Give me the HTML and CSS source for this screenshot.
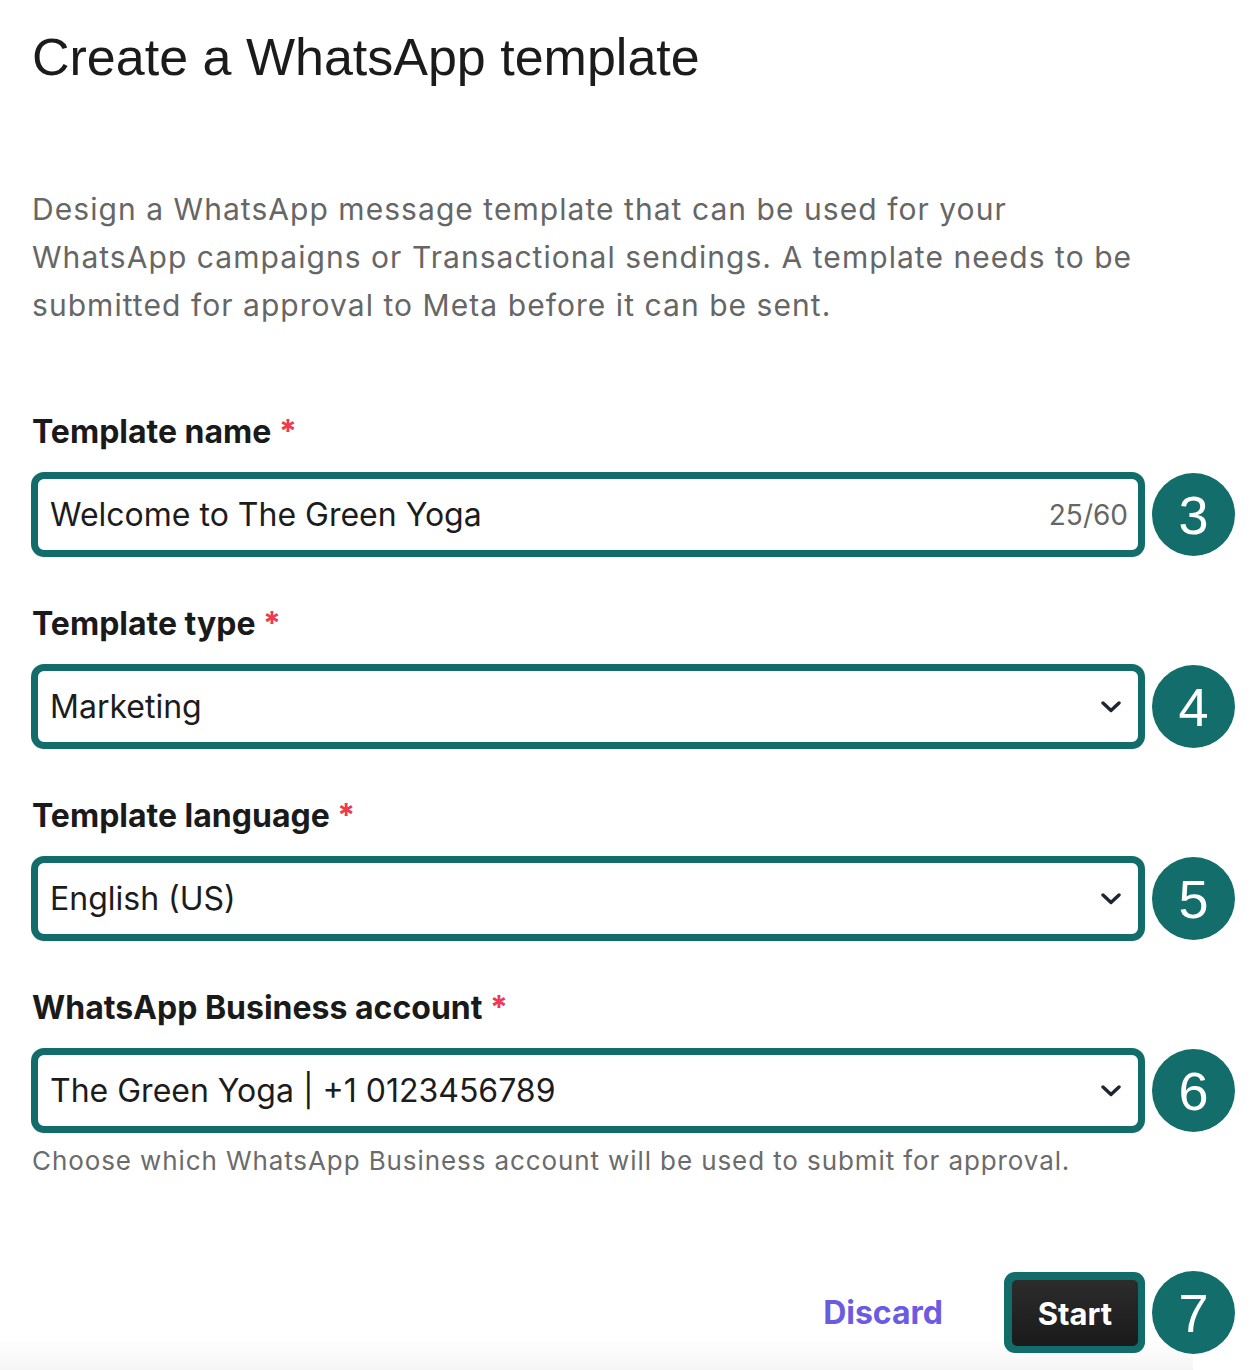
FILE: index.html
```html
<!DOCTYPE html>
<html lang="en">
<head>
<meta charset="utf-8">
<title>Create a WhatsApp template</title>
<link rel="stylesheet" href="styles.css">
</head>
<body>
<div class="page">
  <h1 class="title">Create a WhatsApp template</h1>
  <p class="desc">Design a WhatsApp message template that can be used for your WhatsApp campaigns or Transactional sendings. A template needs to be submitted for approval to Meta before it can be sent.</p>

  <div class="field">
    <div class="label">Template name <span class="req">*</span></div>
    <div class="field-row">
      <div class="box">
        <span class="value">Welcome to The Green Yoga</span>
        <span class="counter">25/60</span>
      </div>
      <div class="badge">3</div>
    </div>
  </div>

  <div class="field">
    <div class="label">Template type <span class="req">*</span></div>
    <div class="field-row">
      <div class="box">
        <span class="value">Marketing</span>
        <svg class="chev" width="20" height="12" viewBox="0 0 20 12"><path d="M2 2 L10 9.5 L18 2" fill="none" stroke="#1e2533" stroke-width="3.4" stroke-linecap="round" stroke-linejoin="round"/></svg>
      </div>
      <div class="badge">4</div>
    </div>
  </div>

  <div class="field">
    <div class="label">Template language <span class="req">*</span></div>
    <div class="field-row">
      <div class="box">
        <span class="value">English (US)</span>
        <svg class="chev" width="20" height="12" viewBox="0 0 20 12"><path d="M2 2 L10 9.5 L18 2" fill="none" stroke="#1e2533" stroke-width="3.4" stroke-linecap="round" stroke-linejoin="round"/></svg>
      </div>
      <div class="badge">5</div>
    </div>
  </div>

  <div class="field">
    <div class="label">WhatsApp Business account <span class="req">*</span></div>
    <div class="field-row">
      <div class="box">
        <span class="value">The Green Yoga | +1 0123456789</span>
        <svg class="chev" width="20" height="12" viewBox="0 0 20 12"><path d="M2 2 L10 9.5 L18 2" fill="none" stroke="#1e2533" stroke-width="3.4" stroke-linecap="round" stroke-linejoin="round"/></svg>
      </div>
      <div class="badge">6</div>
    </div>
    <div class="help">Choose which WhatsApp Business account will be used to submit for approval.</div>
  </div>

  <div class="footer">
    <a class="discard">Discard</a>
    <div class="start-ring"><button class="start">Start</button></div>
    <div class="badge">7</div>
  </div>
</div>
</body>
</html>
```

FILE: styles.css
```css
* { box-sizing: border-box; }

html, body {
  margin: 0;
  padding: 0;
  background: #ffffff;
}

body {
  font-family: Inter, "Noto Sans", sans-serif;
  color: #1c1c1c;
}

.page {
  width: 1254px;
  height: 1370px;
  padding: 27px 0 0 32px;
  background-image: linear-gradient(to bottom, rgba(246,246,246,0) 1338px, #f5f5f5 1370px);
  background-size: 1193px 100%;
  background-repeat: no-repeat;
  overflow: hidden;
}

.title {
  margin: 0;
  font-family: "Liberation Sans", Arial, sans-serif;
  font-weight: 400;
  font-size: 52px;
  line-height: 60px;
  color: #1b1b1b;
}

.desc {
  margin: 98px 0 0 0;
  width: 1110px;
  font-size: 30px;
  line-height: 48px;
  letter-spacing: 1.05px;
  color: #666666;
}

.field { margin-top: 47px; }
.field:first-of-type { margin-top: 83px; }

.label {
  font-size: 32px;
  line-height: 40px;
  font-weight: 700;
  color: #1a1a1a;
}

.req {
  color: #f0384e;
  font-weight: 700;
}

.field-row {
  display: flex;
  align-items: center;
  gap: 7px;
  margin: 20px 0 0 -1px;
}

.box {
  flex: none;
  width: 1114px;
  height: 85px;
  border: 7px solid #126c69;
  border-radius: 13px;
  background: #ffffff;
  display: flex;
  align-items: center;
  justify-content: space-between;
  padding: 0 10px 0 12px;
}

.value {
  font-size: 32px;
  color: #1c1c1c;
  white-space: pre;
}

.counter {
  font-size: 28px;
  color: #666666;
}

.chev {
  display: block;
  margin-right: 7px;
}

.badge {
  flex: none;
  width: 83px;
  height: 83px;
  border-radius: 50%;
  background: #136d6a;
  color: #ffffff;
  display: flex;
  align-items: center;
  justify-content: center;
  font-family: "Liberation Sans", Arial, sans-serif;
  font-size: 54px;
}

.help {
  margin-top: 10px;
  font-size: 26px;
  line-height: 36px;
  letter-spacing: 0.9px;
  color: #6b6b6b;
}

.footer {
  display: flex;
  align-items: center;
  justify-content: flex-end;
  width: 1204px;
  margin: 92px 0 0 -1px;
}

.discard {
  font-size: 32px;
  font-weight: 700;
  color: #6a5be2;
  margin-right: 61px;
  cursor: pointer;
}

.start-ring {
  flex: none;
  width: 141px;
  height: 81px;
  padding: 8px 7px 7px 8px;
  background: #126c69;
  border-radius: 11px;
  margin-right: 7px;
}

.start {
  display: flex;
  align-items: center;
  justify-content: center;
  width: 126px;
  height: 66px;
  border: none;
  border-radius: 5px;
  background: linear-gradient(to bottom, #2c2c2c, #1a1a1a);
  color: #ffffff;
  font-family: Inter, "Noto Sans", sans-serif;
  font-size: 31px;
  font-weight: 700;
  padding: 0;
}
```
